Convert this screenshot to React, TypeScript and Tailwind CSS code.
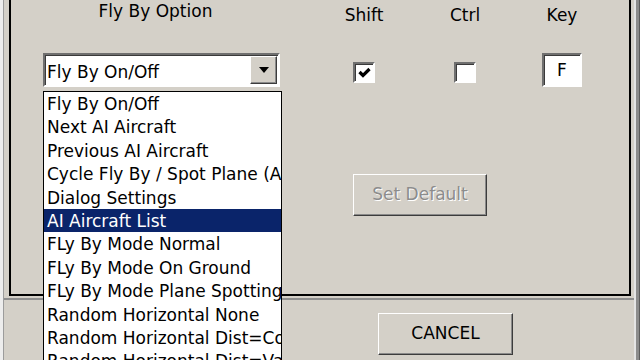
import React from 'react';

const items = [
    'Fly By On/Off',
    'Next AI Aircraft',
    'Previous AI Aircraft',
    'Cycle Fly By / Spot Plane (AI/User)',
    'Dialog Settings',
    'AI Aircraft List',
    'FLy By Mode Normal',
    'FLy By Mode On Ground',
    'FLy By Mode Plane Spotting',
    'Random Horizontal None',
    'Random Horizontal Dist=Constant',
    'Random Horizontal Dist=Variable',
];

const sunken = 'border-2 border-t-[#6f6f6f] border-l-[#6f6f6f] border-b-white border-r-white shadow-[inset_1px_1px_0_#3a3a3a]';
const raised = 'border border-t-white border-l-white border-b-[#3c3c3c] border-r-[#3c3c3c] shadow-[inset_-1px_-1px_0_#8a8a8a]';

const CheckBox = ({ checked }: { checked: boolean }) => (
    <div className={`w-[22px] h-[21px] bg-white flex items-center justify-center ${sunken}`}>
        {checked && (
            <svg width="13" height="12" viewBox="0 0 13 12">
                <path d="M1.5 5 L5 8.5 L11.5 2" fill="none" stroke="#000" strokeWidth="3.2" />
            </svg>
        )}
    </div>
);

const App: React.FC = () => {
    return (
        <div className="w-[640px] h-[360px] overflow-hidden bg-[#d4d0c8] flex font-['DejaVu_Sans',sans-serif] text-[17px] text-black">
            <div className="w-[4px] h-full bg-[#ededed] border-r border-[#9c9c9c]" />

            <div className="flex-1 flex flex-col">
                <div className="h-[300px] border-b-2 border-[#8e8e8e] pl-[5px] pr-[3px]">
                    <div className="relative h-[296px] border-x-2 border-b-2 border-black">
                        <div className="flex">
                            <div className="ml-[32px] w-[237px] flex flex-col">
                                <div className="leading-[24px] -mt-[1px] pr-[12px] text-center">Fly By Option</div>
                                <div className={`mt-[30px] h-[34px] bg-white flex items-center ${sunken}`}>
                                    <span className="flex-1 pl-[2px] pt-[3px] leading-[24px]">Fly By On/Off</span>
                                    <div className={`w-[27px] h-[28px] mr-[1px] bg-[#d4d0c8] flex items-center justify-center ${raised}`}>
                                        <svg width="10" height="6" viewBox="0 0 10 6">
                                            <path d="M0 0 H10 L5 6 Z" fill="#000" />
                                        </svg>
                                    </div>
                                </div>
                            </div>

                            <div className="ml-[54px] w-[60px] flex flex-col items-center">
                                <div className="leading-[24px] pt-[3px]">Shift</div>
                                <div className="mt-[35px]">
                                    <CheckBox checked />
                                </div>
                            </div>

                            <div className="ml-[41px] w-[60px] flex flex-col items-center">
                                <div className="leading-[24px] pt-[3px]">Ctrl</div>
                                <div className="mt-[35px]">
                                    <CheckBox checked={false} />
                                </div>
                            </div>

                            <div className="ml-[37px] w-[60px] flex flex-col items-center">
                                <div className="leading-[24px] pt-[3px]">Key</div>
                                <div className={`mt-[26px] w-[40px] h-[34px] bg-white flex items-center justify-center leading-none ${sunken}`}>
                                    F
                                </div>
                            </div>
                        </div>

                        <div className="mt-[87px] ml-[342px]">
                            <div className={`w-[134px] h-[42px] flex items-center justify-center ${raised}`}>
                                <span className="text-[#8c8c8c] [text-shadow:1px_1px_0_#ffffff]">Set Default</span>
                            </div>
                        </div>

                        <div className="absolute left-[32px] top-[91px] w-[239px] z-10 bg-white border border-black">
                            {items.map((item, i) => (
                                <div
                                    key={item}
                                    className={`h-[23.4px] leading-[25px] pl-[3px] whitespace-nowrap overflow-hidden ${i === 5 ? 'bg-[#0a246a] text-white' : ''}`}
                                >
                                    {item}
                                </div>
                            ))}
                        </div>
                    </div>
                </div>

                <div className="flex pl-[374px] pt-[13px]">
                    <div className={`w-[135px] h-[42px] flex items-center justify-center ${raised}`}>
                        CANCEL
                    </div>
                </div>
            </div>

            <div className="w-[6px] h-full bg-[#8c8c8c] border-l-2 border-[#e4e4e4] border-r border-r-[#5c5c5c]" />
        </div>
    );
};

export default App;
